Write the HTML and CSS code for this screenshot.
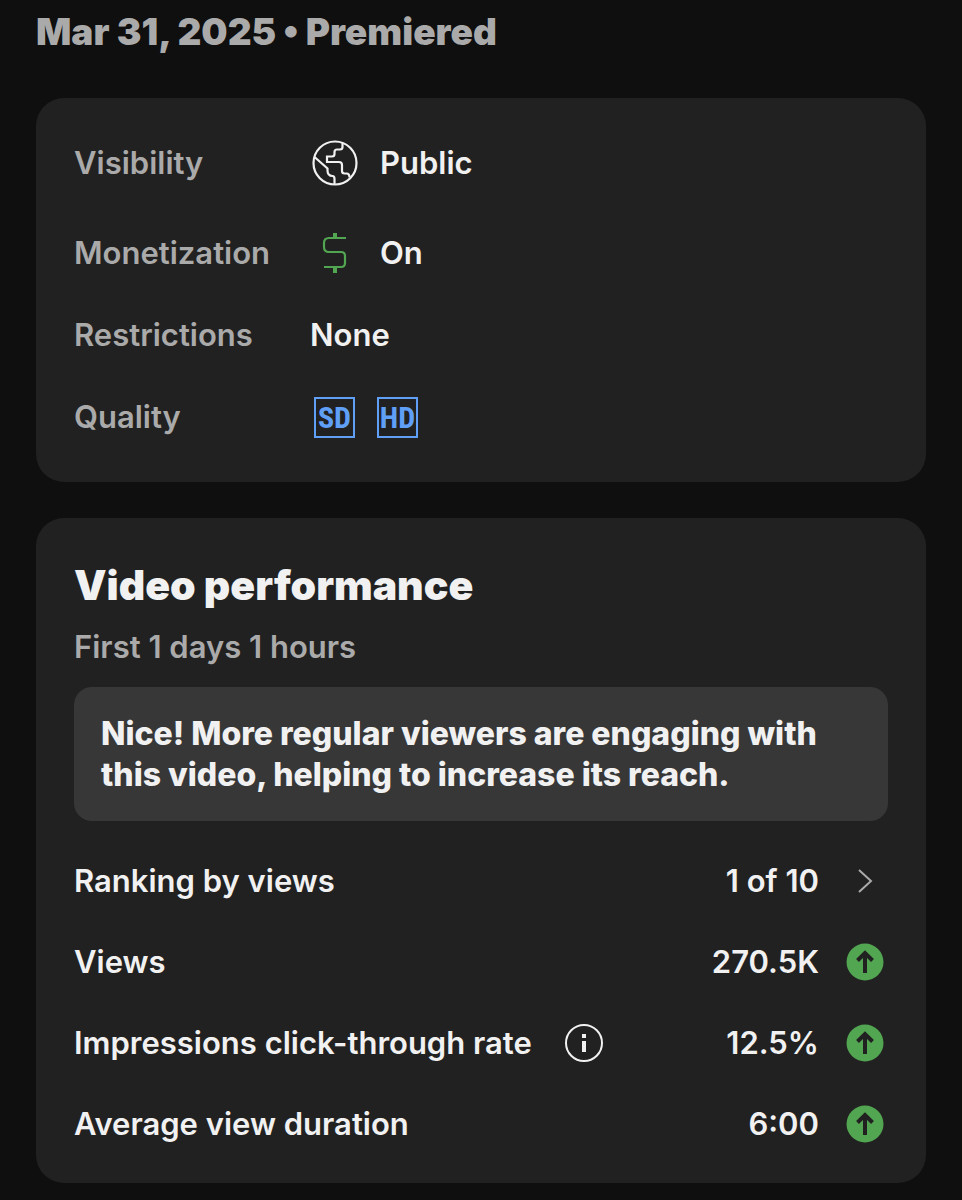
FILE: index.html
```html
<!DOCTYPE html>
<html lang="en">
<head>
    <meta charset="UTF-8">
    <meta name="viewport" content="width=device-width, initial-scale=1.0">
    <title>Video details</title>
    <link rel="stylesheet" href="styles.css">
</head>
<body>
    <main class="page">
        <p class="date">Mar 31, 2025 • Premiered</p>

        <section class="card">
            <dl class="details">
                <div class="detail">
                    <dt>Visibility</dt>
                    <dd>
                        <svg class="detail-icon" viewBox="-1 0 48 48" fill="none" stroke="#f1f1f1" stroke-width="2.2" aria-hidden="true">
                            <circle cx="24" cy="24" r="21.5"/>
                            <path d="M31.500 4v4q0 2.500-2.500 2.500h-3q-2.500 0-2.500 2.500v2q0 2.500-2.500 2.500h-5V23h12q3 0 3 3v6q0 2.500 2.500 2.500h2q3 0 3 4M3.500 18l13 11.500v2q0 5.500 5 5.500q2 0 2 3v5.500"/>
                        </svg>
                        Public
                    </dd>
                </div>
                <div class="detail">
                    <dt>Monetization</dt>
                    <dd>
                        <svg class="detail-icon" viewBox="-1 0 48 48" fill="none" stroke="#52a551" stroke-width="2.2" aria-hidden="true">
                            <path d="M35 9H18q-5 0-5 5v4q0 5 5 5h12q4 0 4 4v7q0 4-4 4H13"/>
                            <path d="M24 4v5M24 38v6" stroke-width="4"/>
                        </svg>
                        On
                    </dd>
                </div>
                <div class="detail detail-text">
                    <dt>Restrictions</dt>
                    <dd>None</dd>
                </div>
                <div class="detail">
                    <dt>Quality</dt>
                    <dd><span class="badge">SD</span><span class="badge">HD</span></dd>
                </div>
            </dl>
        </section>

        <section class="card performance">
            <h2>Video performance</h2>
            <p class="period">First 1 days 1 hours</p>
            <p class="callout">Nice! More regular viewers are engaging with this video, helping to increase its reach.</p>

            <ul class="stats">
                <li>
                    <a class="stat" href="#ranking">
                        <span class="stat-name">Ranking by views</span>
                        <span class="stat-value">1 of 10</span>
                        <svg class="stat-icon" viewBox="0 0 38 38" fill="none" stroke="#aaa" stroke-width="2" aria-hidden="true">
                            <path d="M13 8l12 11-12 11"/>
                        </svg>
                    </a>
                </li>
                <li class="stat">
                    <span class="stat-name">Views</span>
                    <span class="stat-value">270.5K</span>
                    <svg class="stat-icon" viewBox="0 0 38 38" fill="none" stroke="#212121" stroke-width="4" role="img" aria-label="Up">
                        <circle cx="19" cy="19" r="18.5" fill="#52a551" stroke="none"/>
                        <path d="M19 30V10M11.5 17.5L19 10l7.500 7.500"/>
                    </svg>
                </li>
                <li class="stat">
                    <span class="stat-name">Impressions click-through rate</span>
                    <button class="info" type="button" aria-label="About impressions click-through rate">
                        <svg class="info-icon" viewBox="0 0 38 38" fill="none" stroke="#f1f1f1" aria-hidden="true">
                            <circle cx="19" cy="19" r="18" stroke-width="2"/>
                            <path d="M19 10v4M19 17v11" stroke-width="4"/>
                        </svg>
                    </button>
                    <span class="stat-value">12.5%</span>
                    <svg class="stat-icon" viewBox="0 0 38 38" fill="none" stroke="#212121" stroke-width="4" role="img" aria-label="Up">
                        <circle cx="19" cy="19" r="18.5" fill="#52a551" stroke="none"/>
                        <path d="M19 30V10M11.5 17.5L19 10l7.500 7.500"/>
                    </svg>
                </li>
                <li class="stat">
                    <span class="stat-name">Average view duration</span>
                    <span class="stat-value">6:00</span>
                    <svg class="stat-icon" viewBox="0 0 38 38" fill="none" stroke="#212121" stroke-width="4" role="img" aria-label="Up">
                        <circle cx="19" cy="19" r="18.5" fill="#52a551" stroke="none"/>
                        <path d="M19 30V10M11.5 17.5L19 10l7.500 7.500"/>
                    </svg>
                </li>
            </ul>
        </section>
    </main>
</body>
</html>
```
FILE: styles.css
```css
* {
    box-sizing: border-box;
}
body {
    margin: 0;
    background-color: #0f0f0f;
    color: #f1f1f1;
    font-family: Inter, "Liberation Sans", sans-serif;
    font-size: 31px;
    font-weight: 600;
    line-height: 40px;
}
h2, p, dl, dd, ul {
    margin: 0;
    padding: 0;
}
.page {
    padding: 12px 36px 16px;
}
.date {
    margin-bottom: 46px;
    color: #aaa;
    font-size: 37px;
    font-weight: 900;
}
.card {
    padding: 40px 38px;
    border-radius: 28px;
    background-color: #212121;
}
.details {
    display: flex;
    flex-direction: column;
    gap: 40px;
}
.detail {
    display: grid;
    grid-template-columns: 236px 1fr;
    align-items: center;
    height: 50px;
    line-height: 34px;
}
.detail-text {
    height: 34px;
}
.detail dt {
    color: #aaa;
}
.detail dd {
    display: flex;
    align-items: center;
}
.detail-icon {
    width: 48px;
    height: 48px;
    margin-right: 22px;
}
.badge {
    width: 41px;
    height: 41px;
    margin-left: 4px;
    margin-right: 18px;
    border: 2px solid #5f9ff5;
    color: #5f9ff5;
    font-family: "Liberation Sans Narrow", "Roboto Condensed", Roboto, sans-serif;
    font-size: 30px;
    font-weight: 700;
    line-height: 37px;
    text-align: center;
}
.performance {
    margin-top: 36px;
    padding-top: 43px;
    padding-bottom: 19px;
}
.performance h2 {
    font-size: 41px;
    font-weight: 900;
    line-height: 48px;
}
.period {
    margin: 18px 0 20px;
    color: #aaa;
}
.callout {
    margin-bottom: 19px;
    padding: 26px 27px;
    border-radius: 18px;
    background-color: #373737;
    font-size: 32px;
    font-weight: 800;
    line-height: 41px;
}
.stats {
    list-style: none;
}
.stat {
    display: flex;
    align-items: center;
    height: 81px;
    padding-right: 4px;
    color: inherit;
    text-decoration: none;
}
.stat-value {
    margin-left: auto;
}
.stat-icon {
    width: 38px;
    height: 38px;
    margin-left: 27px;
}
.info {
    margin-left: 33px;
    padding: 0;
    border: none;
    background: none;
    cursor: pointer;
}
.info-icon {
    display: block;
    width: 38px;
    height: 38px;
}
```
